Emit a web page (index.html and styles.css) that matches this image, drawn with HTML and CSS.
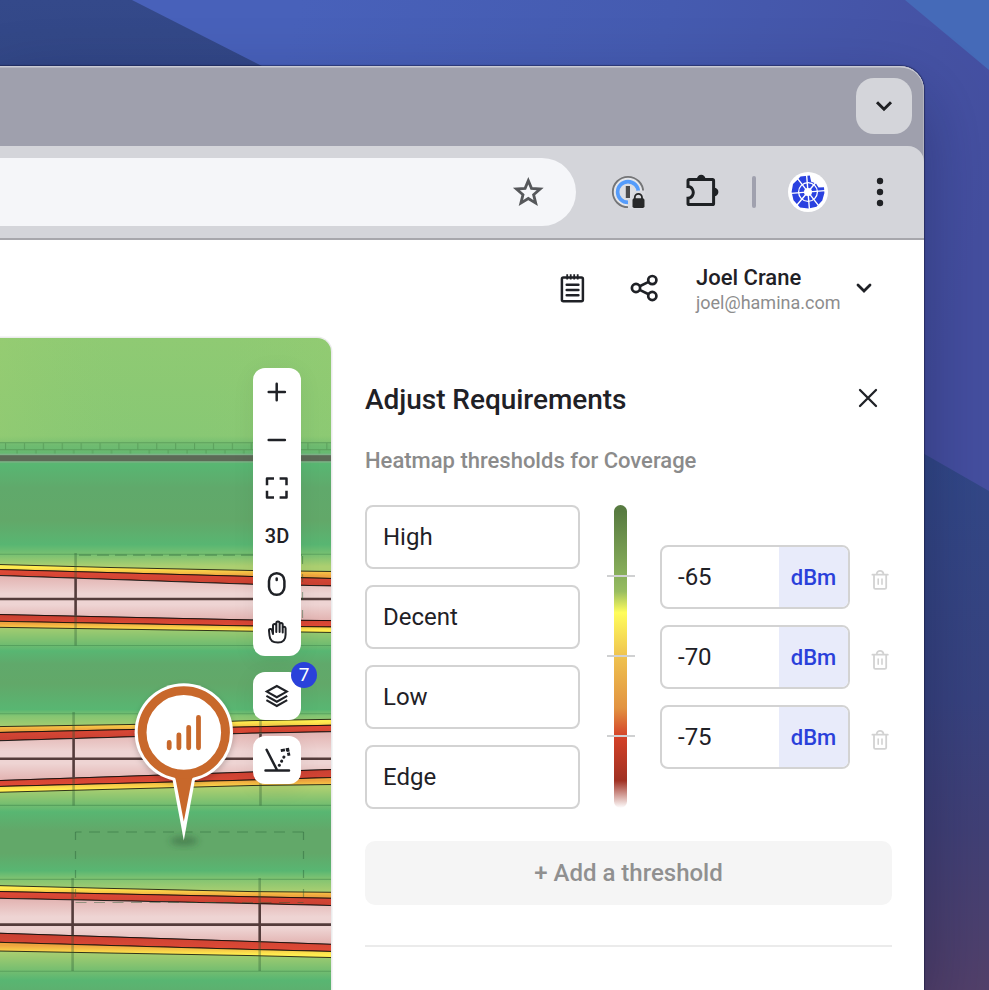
FILE: index.html
```html
<!DOCTYPE html>
<html lang="en">
<head>
<meta charset="utf-8">
<title>Adjust Requirements</title>
<link rel="stylesheet" href="styles.css">
</head>
<body>
<svg class="wallpaper" viewBox="0 0 989 990" preserveAspectRatio="none" aria-hidden="true">
  <defs>
    <linearGradient id="sky" gradientUnits="userSpaceOnUse" x1="300" y1="0" x2="989" y2="200"><stop offset="0" stop-color="#4861ba"/><stop offset=".5" stop-color="#455bb0"/><stop offset="1" stop-color="#454fa0"/></linearGradient>
    <linearGradient id="navy" x1="0" y1="0" x2="0" y2="1"><stop offset="0" stop-color="#34498a"/><stop offset="1" stop-color="#2f4480"/></linearGradient>
    <linearGradient id="dusk" gradientUnits="userSpaceOnUse" x1="0" y1="460" x2="0" y2="990"><stop offset="0" stop-color="#324888"/><stop offset=".45" stop-color="#384380"/><stop offset=".7" stop-color="#414076"/><stop offset="1" stop-color="#52406a"/></linearGradient>
  </defs>
  <rect width="989" height="990" fill="url(#sky)"/>
  <path d="M0 0H132L264 67V160H0Z" fill="url(#navy)"/>
  <path d="M905 0H989V70Z" fill="#456ab8"/>
  <path d="M900 440L989 491V990H900Z" fill="url(#dusk)"/>
</svg>

<div class="window">
  <div class="tabstrip">
    <div class="tab-search"><svg width="20" height="14" viewBox="0 0 20 14"><path d="M3 3.2L10 10.2L17 3.2" fill="none" stroke="#1f2023" stroke-width="3"/></svg></div>
  </div>
  <div class="toolbar">
    <div class="omnibox">
      <svg width="32" height="32" viewBox="0 0 32 32"><path d="M16.3 4.6L19.5 12.4L28.2 13L21.6 18.7L23.7 27.1L16.3 22.5L8.9 27.1L11 18.7L4.4 13L13.1 12.4Z" fill="none" stroke="#56585b" stroke-width="2.8"/></svg>
    </div>
    <svg class="ext-lock" width="34" height="34" viewBox="0 0 34 34">
      <circle cx="17" cy="17" r="14.2" fill="#e4e6ea"/><circle cx="17" cy="17" r="15.2" fill="none" stroke="#747577" stroke-width="1.8"/>
      <circle cx="17" cy="17" r="10.4" fill="#dddee3" stroke="#559cfb" stroke-width="3.6"/>
      <rect x="14.8" y="11" width="4.2" height="12" fill="#4b4b4d"/>
      <path d="M17 34V24H20.5Q20.5 15.8 27 15.5H34V34Z" fill="#d9dadf"/>
      <rect x="21.5" y="23.3" width="12" height="9.7" rx="1.8" fill="#272829"/><path d="M23.8 24V22.5a3.6 3.6 0 0 1 7.2 0V24" fill="none" stroke="#272829" stroke-width="1.8"/>
    </svg>
    <svg class="ext-puzzle" width="36" height="36" viewBox="0 0 36 36">
      <path d="M5.2 6.6H28.4Q29.6 6.6 29.6 7.8V30.4Q29.6 31.6 28.4 31.6H5.2Q4 31.6 4 30.4V25.2C8.8 25 9.3 20 9.3 19.4C9.3 18.8 8.8 13.8 4 13.6V7.8Q4 6.6 5.2 6.6Z" fill="none" stroke="#1e2124" stroke-width="3"/>
      <path d="M13 6a4.2 4.2 0 0 1 8.4 0ZM30.2 14.8a4.2 4.2 0 0 1 0 8.4Z" fill="#1e2124"/>
    </svg>
    <span class="bar-sep"></span>
    <svg class="avatar" width="40" height="40" viewBox="0 0 40 40">
      <circle cx="20" cy="20" r="20" fill="#fff"/>
      <path d="M12.5 4.6L21.8 3.6L23.2 9.8L28 11.5L30.6 15.6L36 15.2L36.4 21L34.3 28.5L28.5 34.8L20.5 36.5L12 35.4L5.5 28.3L3.6 20L5 12L9.5 7.8Z" fill="#2a41e0"/>
      <circle cx="20" cy="20" r="9.4" fill="none" stroke="#fff" stroke-width="1.3"/>
      <g stroke="#fff" stroke-width="1.4"><path d="M18.6 3L21.4 37M3 21.4L37 18.6M9.4 6.4L30.6 33.6M29 9L9 33"/></g>
      <circle cx="20" cy="20" r="4" fill="#fff"/>
    </svg>
    <svg class="kebab" width="8" height="32" viewBox="0 0 8 32"><g fill="#202225"><circle cx="4" cy="5" r="3.2"/><circle cx="4" cy="16" r="3.2"/><circle cx="4" cy="27" r="3.2"/></g></svg>
  </div>

  <header class="app-header">
    <svg class="notes" width="28" height="32" viewBox="0 0 28 32"><g fill="none" stroke="#1f2126" stroke-width="2.5"><rect x="3.9" y="5.4" width="21" height="23.8" rx="1.5"/><path d="M9.2 2.2V7.6M12.7 2.2V7.6M16.2 2.2V7.6M19.7 2.2V7.6" stroke-width="1.8"/><path d="M8.7 12.8H20.4M8.7 18H20.4M8.7 23.3H20.4" stroke-linecap="round"/></g></svg>
    <svg class="share" width="30" height="30" viewBox="0 0 30 30"><g fill="none" stroke="#1f2126" stroke-width="2.7"><circle cx="7" cy="15" r="4.1"/><circle cx="23.3" cy="7.1" r="4.1"/><circle cx="23.3" cy="23" r="4.1"/><path d="M10.7 13.2L19.6 8.9M10.7 16.9L19.6 21.2"/></g></svg>
    <div class="user"><div class="user-name">Joel Crane</div><div class="user-mail">joel@hamina.com</div></div>
    <svg class="chev" width="18" height="12" viewBox="0 0 18 12"><path d="M3 3.1L9 9L15 3.1" fill="none" stroke="#1f2126" stroke-width="2.8" stroke-linecap="round"/></svg>
  </header>

  <main class="content">
    <section class="map">
      <svg class="heatmap" width="331" height="652" viewBox="0 338 331 652">
        <defs>
          <linearGradient id="green" gradientUnits="userSpaceOnUse" x1="0" y1="338" x2="0" y2="990">
            <stop offset="0" stop-color="#8fca73"/><stop offset=".15" stop-color="#88c874"/><stop offset=".165" stop-color="#6fbb70"/>
            <stop offset=".195" stop-color="#58b672"/><stop offset=".23" stop-color="#60a96b"/><stop offset=".28" stop-color="#62a869"/><stop offset=".317" stop-color="#58b672"/><stop offset=".334" stop-color="#7dc272"/><stop offset=".35" stop-color="#accf70"/>
            <stop offset=".44" stop-color="#accf70"/><stop offset=".469" stop-color="#73bd70"/><stop offset=".48" stop-color="#58b672"/><stop offset=".50" stop-color="#60a96b"/><stop offset=".53" stop-color="#62a869"/><stop offset=".57" stop-color="#58b672"/><stop offset=".58" stop-color="#85c572"/><stop offset=".6" stop-color="#accf70"/>
            <stop offset=".69" stop-color="#accf70"/><stop offset=".716" stop-color="#73bd70"/><stop offset=".727" stop-color="#58b672"/><stop offset=".755" stop-color="#62a869"/><stop offset=".79" stop-color="#62a869"/><stop offset=".817" stop-color="#58b672"/><stop offset=".83" stop-color="#82c472"/><stop offset=".85" stop-color="#accf70"/>
            <stop offset=".94" stop-color="#accf70"/><stop offset=".971" stop-color="#73bd70"/><stop offset=".985" stop-color="#58b672"/><stop offset="1" stop-color="#5db06f"/>
          </linearGradient>
          <linearGradient id="glow" x1="0" x2="1" y1="0" y2="0"><stop offset="0" stop-color="#a0cf70" stop-opacity=".35"/><stop offset=".5" stop-color="#88c874" stop-opacity="0"/><stop offset="1" stop-color="#9ace70" stop-opacity=".25"/></linearGradient>
          <linearGradient id="pink" x1="0" x2="0" y1="0" y2="1"><stop offset="0" stop-color="#e2b2b0"/><stop offset=".4" stop-color="#eed4d3"/><stop offset=".65" stop-color="#eed4d3"/><stop offset="1" stop-color="#e2b2b0"/></linearGradient>
          <linearGradient id="yellowDown" x1="0" x2="0" y1="0" y2="1"><stop offset=".2" stop-color="#ffed50"/><stop offset=".8" stop-color="#efa43f"/></linearGradient>
          <linearGradient id="yellowUp" x1="0" x2="0" y1="0" y2="1"><stop offset=".2" stop-color="#efa43f"/><stop offset=".8" stop-color="#ffed50"/></linearGradient>
          <linearGradient id="redDown" x1="0" x2="0" y1="0" y2="1"><stop offset="0" stop-color="#e04a36"/><stop offset="1" stop-color="#c84032"/></linearGradient>
          <linearGradient id="redUp" x1="0" x2="0" y1="0" y2="1"><stop offset="0" stop-color="#c84032"/><stop offset="1" stop-color="#e04a36"/></linearGradient>
          <filter id="soft" x="-50%" y="-50%" width="200%" height="200%"><feGaussianBlur stdDeviation="3"/></filter>
          <pattern id="bricks" patternUnits="userSpaceOnUse" x="5" y="442" width="18.9" height="14"><path d="M0 .8H19M0 7.8H19M.6 1V8M12 8V14" fill="none" stroke="#4c8c4d" stroke-opacity=".6" stroke-width="1"/></pattern>
        </defs>
        <rect y="338" width="331" height="652" fill="url(#green)"/>
        <rect y="338" width="331" height="104" fill="url(#glow)"/>
        <rect y="442" width="331" height="13" fill="url(#bricks)"/>
        <rect y="453.6" width="331" height="9" fill="#7cb487"/><rect y="455.2" width="331" height="6" fill="#5c6b57"/>

        <g stroke="#070707" stroke-width=".8">
          <path d="M-2 564.5L110 567.5L252 570.5L333 571.5V578.5L252 576.5L-2 569.5Z" fill="url(#yellowDown)"/>
          <path d="M-2 569.5L252 576.5L333 578.5V586L252 584.3L-2 575.5Z" fill="url(#redDown)"/>
          <path d="M-2 575.5L252 584.3L333 586V620.6L252 620L-2 614.5Z" fill="url(#pink)"/>
          <path d="M-2 614.5L252 620L333 620.6V627L252 626L-2 621.3Z" fill="url(#redUp)"/>
          <path d="M-2 621.3L252 626L333 627V632.5L252 631.2L-2 627.3Z" fill="url(#yellowUp)"/>
          <path d="M-2 726.6L130 724.5L252 720.6L333 719.3V725.2L252 726.8L-2 732.5Z" fill="url(#yellowDown)"/>
          <path d="M-2 732.5L252 726.8L333 725.2V731.7L252 733.2L-2 740.8Z" fill="url(#redDown)"/>
          <path d="M-2 740.8L252 733.2L333 731.7V769.5L252 772L-2 780.6Z" fill="url(#pink)"/>
          <path d="M-2 780.6L252 772L333 769.5V777.5L252 780L-2 786.5Z" fill="url(#redUp)"/>
          <path d="M-2 786.5L252 780L333 777.5V784.5L252 785.5L-2 792.3Z" fill="url(#yellowUp)"/>
          <path d="M-2 885.6L100 888.2L252 891.6L333 892.3V898.3L252 896.8L-2 891.5Z" fill="url(#yellowDown)"/>
          <path d="M-2 891.5L252 896.8L333 898.3V905.6L252 903.6L-2 898.3Z" fill="url(#redDown)"/>
          <path d="M-2 898.3L252 903.6L333 905.6V944.4L252 941.5L-2 933.2Z" fill="url(#pink)"/>
          <path d="M-2 933.2L252 941.5L333 944.4V951.5L252 949.5L-2 942.3Z" fill="url(#redUp)"/>
          <path d="M-2 942.3L252 949.5L333 951.5V957.6L252 955.6L-2 951Z" fill="url(#yellowUp)"/>
        </g>

        <g fill="none" stroke="#347b44" stroke-opacity=".4" stroke-width="1.1"><path d="M0 554.3H331M0 645.5H331M0 713.7H331M0 805.4H331M0 879.4H331M0 971.3H331"/></g>
        <g stroke="#543c3b" stroke-width="2.6"><path d="M0 599H331M0 758.8H331M0 924.6H331M75.6 578V616M73.6 738V778M260.5 734V771M72.6 900V935M259.7 904V941"/></g>
        <g stroke="#25552e" stroke-opacity=".32" stroke-width="2.6"><path d="M75.6 553V578M75.6 616V645.5M73.6 712V738M73.6 778V805.5M260.5 720V734M260.5 771V805.5M72.6 878V900M72.6 935V971M259.7 878V904M259.7 941V971"/></g>
        <g fill="none" stroke="#245b32" stroke-opacity=".42" stroke-width="1.2">
          <path d="M79 555.2H302" stroke-dasharray="12 6"/><path d="M302.5 556V625" stroke-dasharray="8 10"/>
          <path d="M303.5 832H75.5" stroke-dasharray="11 7.5"/><path d="M303.5 832V902" stroke-dasharray="8 11"/><path d="M75.5 832V902" stroke-dasharray="8 11"/><path d="M75.5 902.5H303.5" stroke-dasharray="11 7.5"/>
        </g>

        <ellipse cx="184" cy="841" rx="14" ry="5" fill="#2c5836" fill-opacity=".42" filter="url(#soft)"/>
        <circle cx="184" cy="735" r="49" fill="#000" fill-opacity=".22" filter="url(#soft)"/>
        <path d="M172 777L183.8 840.5L195.5 777Z" fill="#fff"/>
        <circle cx="183.8" cy="732.4" r="49.2" fill="#fff"/>
        <path d="M171 773Q175.3 777 175.8 780L183.8 821.5L191.8 780Q192.3 777 197 773Z" fill="#c8682b"/>
        <circle cx="183.8" cy="732.4" r="41.7" fill="#fff" stroke="#c8682b" stroke-width="8.8"/>
        <path d="M169.2 742.4V747.8M178.9 734.8V747.8M188.7 727.3V747.8M198.5 717.3V747.8" stroke="#c8682b" stroke-width="4.8" stroke-linecap="round"/>
      </svg>

      <div class="map-tools">
        <div class="tool-group">
          <button class="tool"><svg width="32" height="32" viewBox="0 0 32 32"><path d="M15.7 7.8V24.2M7.7 16H23.9"/></svg></button>
          <button class="tool"><svg width="32" height="32" viewBox="0 0 32 32"><path d="M7.7 16H23.9"/></svg></button>
          <button class="tool"><svg width="32" height="32" viewBox="0 0 32 32"><path d="M6 13.2V6.5H13M18.6 6.5H25.5V13.2M25.5 18.8V25.6H18.6M13 25.6H6V18.8" stroke-linecap="butt"/></svg></button>
          <button class="tool tool-text">3D</button>
          <button class="tool"><svg width="32" height="32" viewBox="0 0 32 32"><rect x="8" y="5.2" width="15.4" height="21.6" rx="7.7"/><path d="M15.7 10.4V12"/></svg></button>
          <button class="tool"><svg width="32" height="32" viewBox="0 0 32 32"><path d="M12 17.5V9.6C12 7.3 15.3 7.3 15.3 9.6V16M15.3 15V7.2C15.3 5 18.6 5 18.6 7.2V16M18.6 15V8.7C18.6 6.5 21.7 6.5 21.7 8.7V16.5M21.7 16V12.2C21.7 10.2 24.6 10.2 24.6 12.2V18.5C24.6 24 21.5 26.6 17 26.6C12 26.6 8.8 24 8.5 19.5L8 14.6C7.8 12.6 10.7 12.3 11 14.2L12 18" stroke-width="2"/></svg></button>
        </div>
        <div class="tool-group"><button class="tool"><svg width="32" height="32" viewBox="0 0 32 32"><g stroke-width="2.1" stroke-linejoin="miter" stroke-linecap="butt"><path d="M15.8 6L25.8 11.6L15.8 17.2L5.8 11.6ZM5.4 15.8L15.8 21.7L26.2 15.8M5.4 20.2L15.8 26L26.2 20.2"/></g></svg></button><span class="badge">7</span></div>
        <div class="tool-group"><button class="tool"><svg width="32" height="32" viewBox="0 0 32 32"><path d="M4.5 26.5H28M5.6 5.8L16 26"/><path d="M18.3 21.3L24.8 9.6" stroke-dasharray=".1 4.6" stroke-width="3"/><path d="M19.8 6.6L26.8 5.4L28 11.8" stroke-linecap="butt" stroke-linejoin="miter" stroke-width="2.9" stroke-dasharray="4.2 .9 4.4 .9 5"/></svg></button></div>
      </div>
    </section>

    <aside class="panel">
      <div class="panel-head"><h1>Adjust Requirements</h1><svg class="close" width="24" height="24" viewBox="0 0 24 24"><path d="M4 4L20 20M20 4L4 20" stroke="#1f2126" stroke-width="2.3" stroke-linecap="round"/></svg></div>
      <p class="subtitle">Heatmap thresholds for Coverage</p>
      <div class="thresholds">
        <div class="names"><div class="field">High</div><div class="field">Decent</div><div class="field">Low</div><div class="field">Edge</div></div>
        <div class="scale"><i></i><i></i><i></i></div>
        <div class="limits">
          <div class="limit"><div class="value"><span class="num">-65</span><span class="unit">dBm</span></div><svg class="trash" width="20" height="24" viewBox="0 0 20 24"><g fill="none" stroke="#d2d2d2" stroke-width="1.8" stroke-linecap="round"><path d="M2.4 6.7H17.8M4 7V19.4Q4 20.9 5.5 20.9H14.7Q16.2 20.9 16.2 19.4V7M6.7 6.5C6.7 1.6 13.5 1.6 13.5 6.5"/><path d="M8.2 11V16.2M12 11V16.2" stroke-width="1.6"/></g></svg></div>
          <div class="limit"><div class="value"><span class="num">-70</span><span class="unit">dBm</span></div><svg class="trash" width="20" height="24" viewBox="0 0 20 24"><g fill="none" stroke="#d2d2d2" stroke-width="1.8" stroke-linecap="round"><path d="M2.4 6.7H17.8M4 7V19.4Q4 20.9 5.5 20.9H14.7Q16.2 20.9 16.2 19.4V7M6.7 6.5C6.7 1.6 13.5 1.6 13.5 6.5"/><path d="M8.2 11V16.2M12 11V16.2" stroke-width="1.6"/></g></svg></div>
          <div class="limit"><div class="value"><span class="num">-75</span><span class="unit">dBm</span></div><svg class="trash" width="20" height="24" viewBox="0 0 20 24"><g fill="none" stroke="#d2d2d2" stroke-width="1.8" stroke-linecap="round"><path d="M2.4 6.7H17.8M4 7V19.4Q4 20.9 5.5 20.9H14.7Q16.2 20.9 16.2 19.4V7M6.7 6.5C6.7 1.6 13.5 1.6 13.5 6.5"/><path d="M8.2 11V16.2M12 11V16.2" stroke-width="1.6"/></g></svg></div>
        </div>
      </div>
      <button class="add">+ Add a threshold</button>
      <hr>
    </aside>
  </main>
</div>
</body>
</html>
```
FILE: styles.css
```css
* { box-sizing: border-box; }
html, body { height: 100%; }
body {
  margin: 0;
  padding-top: 66px;
  overflow: hidden;
  background: #4556a8;
  font-family: Roboto, "Liberation Sans", sans-serif;
  color: #1f2126;
}
svg { display: block; flex: none; }
button { border: 0; padding: 0; background: none; font: inherit; color: inherit; }

.wallpaper { position: absolute; inset: 0; width: 989px; height: 990px; z-index: -1; }

.window {
  width: 924px;
  height: 924px;
  display: flex;
  flex-direction: column;
  background: #fff;
  border-radius: 0 24px 0 0;
  overflow: hidden;
  box-shadow: 0 0 1px .5px rgba(20, 24, 60, .5), 0 30px 70px rgba(10, 14, 50, .36);
}

.tabstrip {
  height: 100px;
  margin-bottom: -20px;
  padding: 12px 12px 0 0;
  flex: none;
  display: flex;
  justify-content: flex-end;
  background: #9fa0ad;
  border-radius: 0 24px 0 0;
  box-shadow: inset 0 2px 0 -.5px #c9cad3, inset -1px 0 0 #b3b4be;
}
.tab-search {
  width: 56px;
  height: 56px;
  border-radius: 18px;
  background: #d4d5da;
  display: flex;
  align-items: center;
  justify-content: center;
}

.toolbar {
  height: 94px;
  flex: none;
  display: flex;
  align-items: center;
  padding-right: 40px;
  background: #d4d5da;
  border-bottom: 2px solid #a7a7ac;
  border-radius: 0 16px 0 0;
}
.omnibox {
  width: 576px;
  height: 68px;
  padding-right: 32px;
  display: flex;
  align-items: center;
  justify-content: flex-end;
  background: #f5f6f9;
  border-radius: 0 34px 34px 0;
}
.ext-lock { margin-left: 35px; }
.ext-puzzle { margin: -2px 0 0 39px; }
.bar-sep { width: 4px; height: 32px; margin-left: 32px; background: #a0a1ae; border-radius: 2px; }
.avatar { margin-left: 32px; }
.kebab { margin-left: 48px; }

.app-header {
  height: 98px;
  flex: none;
  padding: 0 51px 2px 0;
  display: flex;
  align-items: center;
  justify-content: flex-end;
}
.share { margin-left: 43px; }
.user { width: 145px; margin-left: 37px; padding-top: 4px; }
.user-name { font-size: 22px; line-height: 26px; font-weight: 500; }
.user-mail { font-size: 18px; line-height: 24px; color: #8d8d8d; }
.chev { margin-left: 14px; }

.content { flex: 1; min-height: 0; display: flex; }
.map {
  position: relative;
  width: 331px;
  height: 652px;
  flex: none;
  border-radius: 0 14px 0 0;
  box-shadow: 0 0 0 1.5px #ebebec;
}
.heatmap { border-radius: 0 14px 0 0; }
.map-tools {
  position: absolute;
  top: 30px;
  left: 253px;
  display: flex;
  flex-direction: column;
  gap: 16px;
}
.tool-group {
  position: relative;
  width: 48px;
  border-radius: 12px;
  background: #fff;
  box-shadow: 0 4px 24px rgba(0, 0, 0, .06);
}
.tool { width: 48px; height: 48px; display: flex; align-items: center; justify-content: center; }
.tool svg { fill: none; stroke: #1f2126; stroke-width: 2.5; stroke-linecap: round; stroke-linejoin: round; }
.tool-text { font-size: 20px; font-weight: 500; }
.badge {
  position: absolute;
  top: -10px;
  right: -16px;
  width: 26px;
  height: 26px;
  border-radius: 50%;
  background: #2a41da;
  color: #fff;
  font-size: 19px;
  line-height: 26px;
  text-align: center;
}

.panel { flex: 1; padding: 42px 32px 0 34px; }
.panel-head { height: 40px; padding-right: 12px; display: flex; align-items: center; justify-content: space-between; }
.close { margin-bottom: 4px; }
h1 { margin: 0; font-size: 28px; line-height: 40px; font-weight: 500; letter-spacing: -.04px; }
.subtitle { margin: 25px 0 0; font-size: 22px; line-height: 32px; font-weight: 500; color: #8b8b8b; }
.thresholds { display: flex; margin-top: 28px; height: 304px; }
.names { width: 215px; display: flex; flex-direction: column; gap: 16px; }
.field {
  height: 64px;
  padding-left: 16px;
  border: 2px solid #d3d3d3;
  border-radius: 8px;
  font-size: 24px;
  line-height: 60px;
}
.scale {
  width: 13px;
  height: 303px;
  margin-left: 34px;
  padding-top: 70px;
  border-radius: 7px;
  display: flex;
  flex-direction: column;
  align-items: center;
  gap: 78px;
  background: linear-gradient(#587b41 0, #587b41 2%, #8db45d 25%, #98bd60 28.5%, #fffd5c 35.5%, #efc24f 50%, #e29341 67%, #d44128 76.5%, #a03123 91%, #fff 100%);
}
.scale i { width: 28px; height: 2px; flex: none; background: #d0d1d2; }
.limits { margin: 40px 0 0 33px; display: flex; flex-direction: column; gap: 16px; }
.limit { display: flex; align-items: center; }
.value {
  width: 190px;
  height: 64px;
  display: flex;
  overflow: hidden;
  border: 2px solid #d3d3d3;
  border-radius: 8px;
  font-size: 24px;
  line-height: 60px;
}
.num { flex: 1; padding-left: 16px; }
.unit { width: 69px; background: #e8ebfa; color: #2a41da; font-size: 22px; line-height: 61px; font-weight: 500; text-align: center; }
.trash { margin: 6px 0 0 20px; }
.add {
  display: block;
  width: 527px;
  height: 64px;
  margin-top: 32px;
  border-radius: 10px;
  background: #f5f5f5;
  color: #909090;
  font-size: 24px;
  font-weight: 500;
}
hr { margin: 40px 0 0; border: 0; height: 2px; background: #ebebeb; }
```
